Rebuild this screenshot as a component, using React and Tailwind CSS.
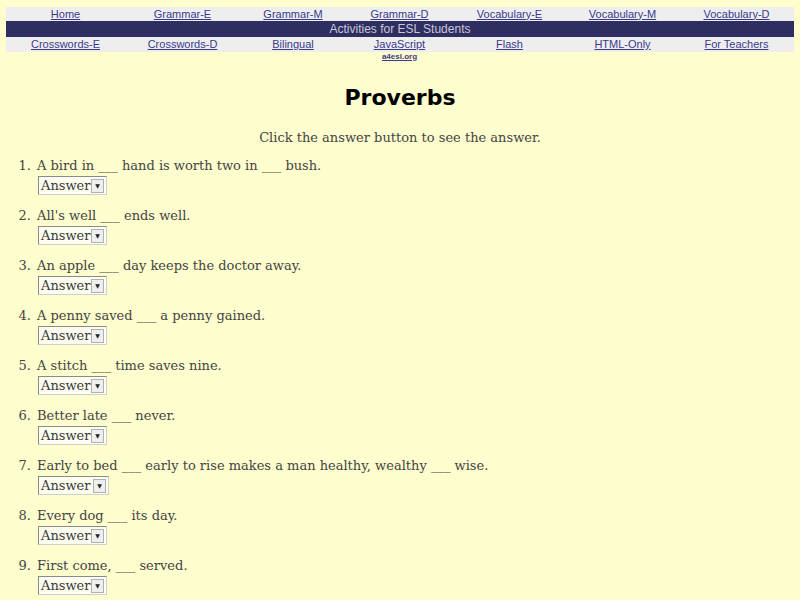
const row1 = ["Home", "Grammar-E", "Grammar-M", "Grammar-D", "Vocabulary-E", "Vocabulary-M", "Vocabulary-D"];
const row2 = ["Crosswords-E", "Crosswords-D", "Bilingual", "JavaScript", "Flash", "HTML-Only", "For Teachers"];

const proverbs = [
  "A bird in ___ hand is worth two in ___ bush.",
  "All's well ___ ends well.",
  "An apple ___ day keeps the doctor away.",
  "A penny saved ___ a penny gained.",
  "A stitch ___ time saves nine.",
  "Better late ___ never.",
  "Early to bed ___ early to rise makes a man healthy, wealthy ___ wise.",
  "Every dog ___ its day.",
  "First come, ___ served.",
];

const cols = "grid grid-cols-[119px_115px_106px_107px_113px_113px_115px]";

function AnswerBox({ wide }) {
  return (
    <div className={`flex items-center h-[19px] border border-[#8a8a8a] border-r-[#cfcfcf] border-b-[#cfcfcf] bg-[#fdfdf0] pl-[2px] pr-[2px] ${wide ? "w-[71px]" : "w-[69px]"}`}>
      <span className="flex-1 text-[13px] leading-none text-[#3a3a3a]">Answer</span>
      <span className="w-[13px] h-[14px] border border-[#b0b0b0] bg-[#efefef] flex items-center justify-center">
        <span className="text-[6px] leading-none text-[#222]">▼</span>
      </span>
    </div>
  );
}

export default function App() {
  return (
    <main className="w-[800px] h-[600px] overflow-hidden bg-[#fefdcd]" style={{ fontFamily: '"DejaVu Serif", serif' }}>
      <div className="pt-[7px] px-[6px]" style={{ fontFamily: '"Liberation Sans", Arial, sans-serif' }}>
        <div className={`${cols} bg-[#eeeeee] h-[14px] items-center`}>
          {row1.map((l) => (
            <div key={l} className="text-center text-[11px] leading-none text-[#3a3a8c] underline">{l}</div>
          ))}
        </div>
        <div className="bg-[#2e2e60] h-[16px] flex items-center justify-center text-[12px] text-[#c8c8d8]">
          Activities for ESL Students
        </div>
        <div className={`${cols} bg-[#eeeeee] h-[15px] items-center`}>
          {row2.map((l) => (
            <div key={l} className="text-center text-[11px] leading-none text-[#3a3a8c] underline">{l}</div>
          ))}
        </div>
        <div className={cols}>
          <div className="col-start-4 text-center text-[8px] leading-none text-[#3a3a8c] underline mt-[1px] font-bold">a4esl.org</div>
        </div>
      </div>

      <h1 className="text-center text-[22px] font-bold text-black mt-[26px] leading-none" style={{ fontFamily: '"DejaVu Sans", sans-serif' }}>
        Proverbs
      </h1>

      <p className="text-center text-[13px] text-[#444] mt-[22px] leading-none">
        Click the answer button to see the answer.
      </p>

      <ol className="mt-[13px]">
        {proverbs.map((p, i) => (
          <li key={i} className="flex h-[50px]">
            <span className="w-[31px] text-right text-[13px] text-[#444] leading-[18px]">{i + 1}.</span>
            <div className="pl-[6px]">
              <div className="text-[13px] text-[#444] leading-[18px]">{p}</div>
              <div className="ml-[1px] mt-[1px]">
                <AnswerBox wide={i === 6} />
              </div>
            </div>
          </li>
        ))}
      </ol>
    </main>
  );
}
